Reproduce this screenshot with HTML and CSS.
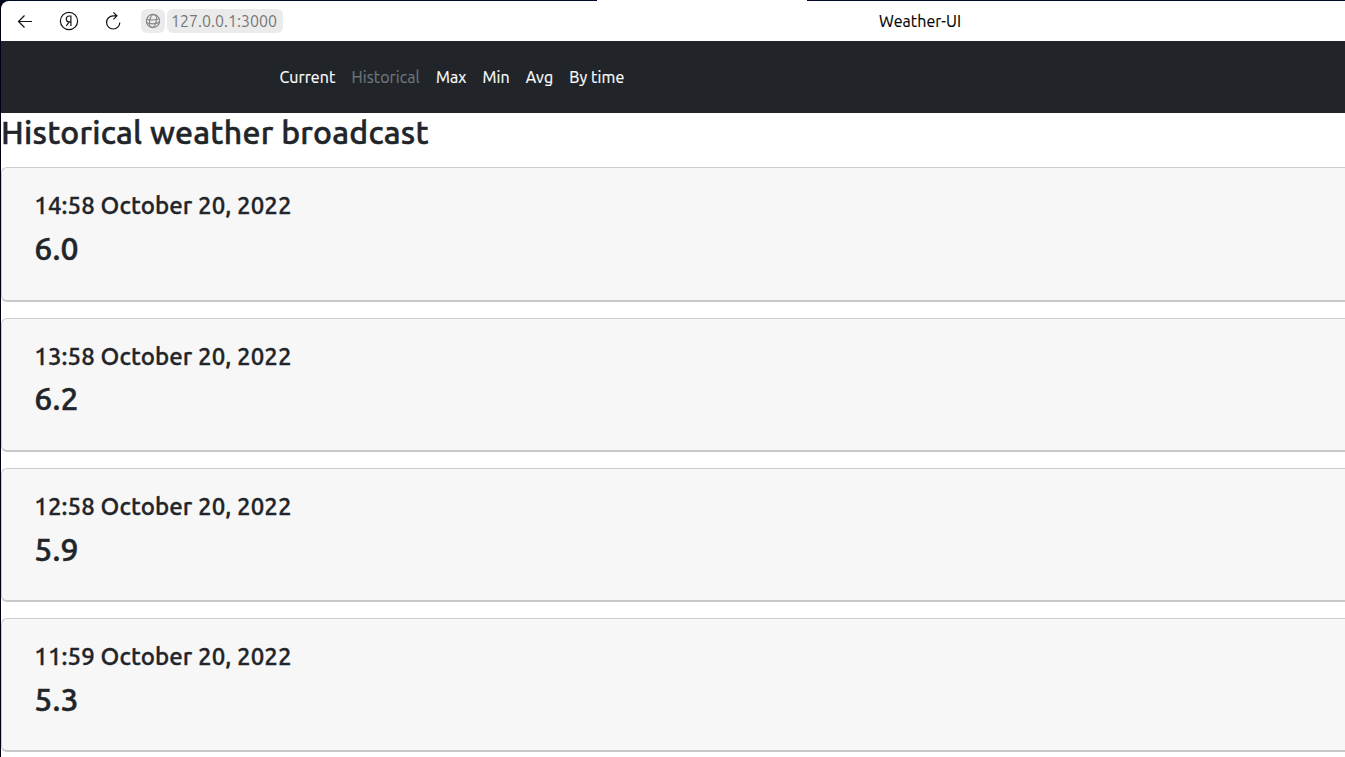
FILE: index.html
```html
<!DOCTYPE html>
<html lang="en">
<head>
<meta charset="utf-8">
<title>Weather-UI</title>
<link rel="stylesheet" href="styles.css">
</head>
<body>
<div class="window">
  <div class="tab-strip"><div class="active-tab"></div></div>
  <header class="toolbar">
    <svg class="icon back" width="16" height="16" viewBox="0 0 16 16"><path d="M15 8.5H1.5M7.5 2.5L1.5 8.5L7.5 14.5"/></svg>
    <svg class="icon home" width="20" height="20" viewBox="0 0 20 20"><circle cx="10" cy="10" r="8.6"/><path d="M11.9 15V5H10.2C8.4 5 7.3 6.2 7.3 7.9C7.3 9.6 8.4 10.8 10.2 10.8H11.9M10.1 10.8L7.3 15"/></svg>
    <svg class="icon reload" width="18" height="20" viewBox="0 0 18 20"><path d="M12.6 4.8H9.2A6.6 6.6 0 1 0 15.8 11.4M9.4 1.3L12.9 4.8L9.4 8.3"/></svg>
    <span class="site-chip"><svg class="globe" width="16" height="16" viewBox="0 0 16 16"><circle cx="8" cy="8" r="6.6"/><ellipse cx="8" cy="8" rx="3.3" ry="6.6" transform="rotate(12 8 8)"/><path d="M1.6 6.2Q7 8 14.2 5.8M1.7 9.7Q8 12 14.4 9.4"/></svg></span>
    <span class="address">127.0.0.1:3000</span>
    <span class="page-title">Weather-UI</span>
  </header>
  <nav class="nav">
    <a class="link">Current</a>
    <a class="link active">Historical</a>
    <a class="link">Max</a>
    <a class="link">Min</a>
    <a class="link">Avg</a>
    <a class="link">By time</a>
  </nav>
  <main>
    <h2 class="heading">Historical weather broadcast</h2>
    <section class="card"><h4 class="date">14:58 October 20, 2022</h4><p class="value">6.0</p></section>
    <section class="card"><h4 class="date">13:58 October 20, 2022</h4><p class="value">6.2</p></section>
    <section class="card"><h4 class="date">12:58 October 20, 2022</h4><p class="value">5.9</p></section>
    <section class="card"><h4 class="date">11:59 October 20, 2022</h4><p class="value">5.3</p></section>
  </main>
</div>
</body>
</html>
```
FILE: styles.css
```css
* { box-sizing: border-box; }
body {
  margin: 0;
  height: 757px;
  overflow: hidden;
  background: #000014;
  color: #212529;
  font-family: Ubuntu, "Noto Sans", sans-serif;
}
.window {
  margin-left: 1px;
  height: 757px;
  overflow: hidden;
}
.tab-strip { height: 1px; background: #000a26; }
.active-tab { width: 210px; height: 1px; margin-left: 596px; background: #fff; }
.toolbar {
  display: flex;
  align-items: center;
  height: 40px;
  padding-left: 16px;
  background: #fff;
  border-top-left-radius: 8px;
}
.icon { fill: none; stroke: #111; stroke-width: 1.2; flex: none; }
.home { margin-left: 26px; }
.reload { margin-left: 25px; }
.site-chip {
  display: flex;
  align-items: center;
  justify-content: center;
  width: 24px;
  height: 24px;
  margin-left: 19px;
  border-radius: 6px;
  background: #ebebeb;
}
.globe { fill: none; stroke: #858585; stroke-width: 1.2; }
.address {
  width: 116px;
  height: 24px;
  margin-left: 2px;
  padding-left: 4px;
  border-radius: 6px;
  background: #ebebeb;
  color: #777;
  font-size: 16px;
  line-height: 24px;
  white-space: nowrap;
}
.page-title {
  margin-left: 596px;
  color: #000;
  font-size: 16px;
  letter-spacing: 0.08px;
  -webkit-text-stroke: 0.15px;
}
.nav {
  display: flex;
  align-items: center;
  gap: 16px;
  height: 72px;
  padding-left: 278.5px;
  background: #212529;
}
.link {
  flex: none;
  color: #fff;
  font-size: 16px;
  letter-spacing: 0.11px;
  white-space: nowrap;
  -webkit-text-stroke: 0.2px;
}
.active { color: #6c757d; }
main { height: 644px; background: #fff; overflow: hidden; }
.heading {
  margin: 0;
  height: 54.4px;
  font-size: 32px;
  font-weight: 500;
  line-height: 39px;
  letter-spacing: 0.25px;
  white-space: nowrap;
  -webkit-text-stroke: 0.5px;
}
.card {
  height: 134.2px;
  margin-bottom: 16px;
  padding: 24px 0 0 32.3px;
  border: 1px solid #ccc;
  border-right: 0;
  border-bottom: 2px solid #c8c8c8;
  border-radius: 6px 0 0 6px;
  background: #f7f7f7;
}
.date {
  margin: 0 0 8px;
  font-size: 24px;
  font-weight: 500;
  line-height: 28.8px;
  letter-spacing: 0.1px;
  -webkit-text-stroke: 0.35px;
}
.value {
  margin: 0;
  font-size: 32px;
  font-weight: 500;
  line-height: 38.4px;
  letter-spacing: 0.2px;
  -webkit-text-stroke: 0.5px;
}
```
